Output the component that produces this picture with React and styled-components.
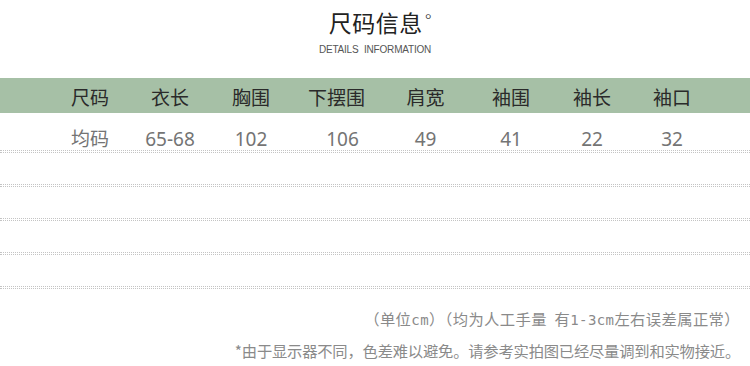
import React from "react";
import styled, { createGlobalStyle } from "styled-components";

const GlobalStyle = createGlobalStyle`
  body {
    margin: 0;
    background: #fff;
    font-family: "Noto Sans", "Noto Sans CJK SC", sans-serif;
  }
`;

const columns = "80px 80px 82px 89px 89px 82px 80px 80px";

const headers = ["尺码", "衣长", "胸围", "下摆围", "肩宽", "袖围", "袖长", "袖口"];
const values = ["均码", "65-68", "102", "106", "49", "41", "22", "32"];

const Page = styled.div`
  width: 750px;
  height: 366px;
  overflow: hidden;
`;

const TitleBlock = styled.div`
  display: flex;
  flex-direction: column;
  align-items: center;
  padding-top: 8px;
`;

const Title = styled.h1`
  margin: 0;
  font-family: "Noto Sans CJK SC", sans-serif;
  font-weight: 400;
  font-size: 23px;
  line-height: 28px;
  color: #222;
  letter-spacing: 0.5px;
  position: relative;
  left: 6px;

  sup {
    font-family: "DejaVu Sans", sans-serif;
    font-weight: 300;
    font-size: 18px;
    line-height: 18px;
    vertical-align: top;
    position: relative;
    top: 4px;
    margin-left: 1px;
  }
`;

const Subtitle = styled.div`
  margin-top: 7px;
  font-family: "Liberation Sans", sans-serif;
  font-size: 10px;
  line-height: 14px;
  color: #555;
  letter-spacing: -0.2px;
  word-spacing: 3px;
`;

const Band = styled.div`
  margin-top: 21px;
  height: 35px;
  background: #a6c0a6;
  display: grid;
  grid-template-columns: ${columns};
  padding-left: 50px;
  align-items: center;
`;

const HeadCell = styled.div`
  text-align: center;
  font-family: "Noto Sans CJK SC", sans-serif;
  font-size: 19px;
  color: #2a2a2a;
  line-height: 24px;
  padding-top: 2px;
`;

const DataRow = styled.div`
  display: grid;
  grid-template-columns: ${columns};
  padding-left: 50px;
  padding-top: 15px;
`;

const DataCell = styled.div`
  text-align: center;
  font-size: 19px;
  line-height: 22px;
  color: #747474;
  position: relative;
  left: ${(p) => p.$shift || 0}px;
`;

const Rule = styled.div`
  height: 1px;
  border-top: 1px dotted #c4c4c4;
  border-bottom: 1px dotted #c4c4c4;
`;

const EmptyRow = styled.div`
  height: 31px;
`;

const Notes = styled.div`
  padding-top: 14px;
  padding-right: 10px;
  display: flex;
  flex-direction: column;
  align-items: flex-end;
`;

const Note = styled.div`
  font-family: "Noto Sans CJK SC", sans-serif;
  font-size: 15.3px;
  line-height: 30px;
  color: #8a8a8a;
  white-space: nowrap;
  letter-spacing: ${(p) => p.$spacing || 0}px;

  span {
    font-family: "DejaVu Sans Mono", monospace;
    font-size: 14px;
  }
`;

export default function App() {
  return (
    <Page>
      <GlobalStyle />
      <TitleBlock>
        <Title>
          尺码信息<sup>°</sup>
        </Title>
        <Subtitle>DETAILS INFORMATION</Subtitle>
      </TitleBlock>
      <Band>
        {headers.map((h) => (
          <HeadCell key={h}>{h}</HeadCell>
        ))}
      </Band>
      <DataRow>
        {values.map((v, i) => (
          <DataCell key={i} $shift={i === 3 ? 6 : 0}>
            {v}
          </DataCell>
        ))}
      </DataRow>
      <Rule />
      {[0, 1, 2, 3].map((i) => (
        <React.Fragment key={i}>
          <EmptyRow />
          <Rule />
        </React.Fragment>
      ))}
      <Notes>
        <Note $spacing={0.4}>
          （单位<span>cm</span>）（均为人工手量&nbsp; 有<span>1-3cm</span>左右误差属正常）
        </Note>
        <Note $spacing={-0.2}>*由于显示器不同，色差难以避免。请参考实拍图已经尽量调到和实物接近。</Note>
      </Notes>
    </Page>
  );
}
